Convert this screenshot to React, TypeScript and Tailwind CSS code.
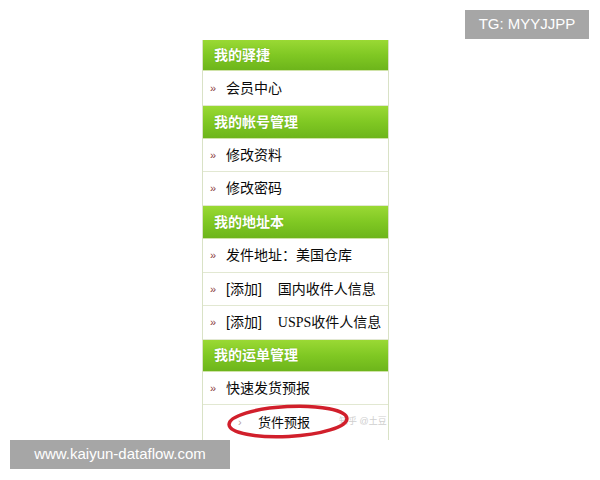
import React from "react";

const font = { fontFamily: '"Liberation Sans", "Noto Sans CJK SC", sans-serif' };

function Header({ text, h }: { text: string; h: string }) {
  return (
    <div
      className={`${h} flex items-center pl-[11px] text-[14px] font-bold text-white bg-gradient-to-b from-[#9ad934] via-[#80c823] to-[#6db51b] border-b border-[#cfe3a8]`}
      style={{ textShadow: "0 0 1px rgba(80,140,20,0.6)" }}
    >
      {text}
    </div>
  );
}

function Row({ children, h }: { children: React.ReactNode; h: string }) {
  return (
    <div className={`${h} flex items-center pl-[7px] text-[14px] text-[#0a0a0a] bg-white border-b border-[#e2e8d2] whitespace-nowrap`}>
      <span className="text-[11px] text-[#8a3b3b] w-[16px]">»</span>
      {children}
    </div>
  );
}

export default function App() {
  return (
    <div className="relative w-[600px] h-[480px] bg-white overflow-hidden" style={font}>
      <div className="absolute right-[11px] top-[10px] w-[124px] h-[29px] bg-[#a6a6a6] flex items-center justify-center text-white text-[15px]" style={{ fontFamily: '"Liberation Sans", sans-serif' }}>
        TG: MYYJJPP
      </div>

      <div className="pt-[40px] pl-[202px]">
        <div className="relative w-[187px] border-x border-[#d9e2c6] flex flex-col overflow-hidden">
          <Header text="我的驿捷" h="h-[31px]" />
          <Row h="h-[35px]">会员中心</Row>
          <Header text="我的帐号管理" h="h-[33px]" />
          <Row h="h-[33px]">修改资料</Row>
          <Row h="h-[34px]">修改密码</Row>
          <Header text="我的地址本" h="h-[33px]" />
          <Row h="h-[34px]">发件地址：美国仓库</Row>
          <Row h="h-[33px]">
            <span>[添加]</span>
            <span className="ml-[16px]">国内收件人信息</span>
          </Row>
          <Row h="h-[34px]">
            <span>[添加]</span>
            <span className="ml-[16px]" style={{ fontFamily: '"Liberation Serif", "Noto Sans CJK SC", serif' }}>USPS</span>
            <span>收件人信息</span>
          </Row>
          <Header text="我的运单管理" h="h-[32px]" />
          <Row h="h-[33px]">快速发货预报</Row>
          <div className="h-[35px] flex items-center pl-[35px] text-[13px] text-[#0a0a0a] bg-white whitespace-nowrap">
            <span className="text-[11px] text-[#b8a0a0] w-[20px]">›</span>
            货件预报
          </div>
          <div className="absolute left-[136px] bottom-[12px] text-[9px] text-[#cfcfcf] whitespace-nowrap">知乎 @土豆</div>
        </div>
      </div>

      <svg className="absolute left-[226px] top-[403px]" width="124" height="37" viewBox="0 0 124 37">
        <ellipse cx="62" cy="18.5" rx="59" ry="15" fill="none" stroke="#d11f2b" strokeWidth="3.5" transform="rotate(-3 62 18.5)" />
      </svg>

      <div className="absolute left-[10px] top-[440px] w-[220px] h-[29px] bg-[#a6a6a6] flex items-center justify-center text-white text-[15px]" style={{ fontFamily: '"Liberation Sans", sans-serif' }}>
        www.kaiyun-dataflow.com
      </div>
    </div>
  );
}
